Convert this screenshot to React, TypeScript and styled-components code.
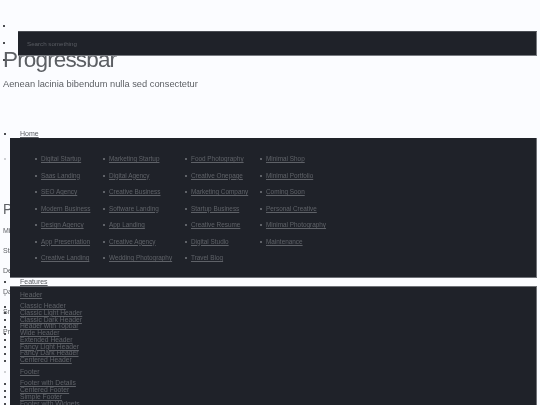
import * as React from 'react';
import styled, { createGlobalStyle } from 'styled-components';

const GlobalStyle = createGlobalStyle`
    html, body {
        margin: 0;
        height: 405px;
        overflow: hidden;
        background: #fbfcff;
    }
`;

const megaLinks = [
    'Digital Startup', 'Saas Landing', 'SEO Agency', 'Modern Business', 'Design Agency', 'App Presentation', 'Creative Landing',
    'Marketing Startup', 'Digital Agency', 'Creative Business', 'Software Landing', 'App Landing', 'Creative Agency', 'Wedding Photography',
    'Food Photography', 'Creative Onepage', 'Marketing Company', 'Startup Business', 'Creative Resume', 'Digital Studio', 'Travel Blog',
    'Minimal Shop', 'Minimal Portfolio', 'Coming Soon', 'Personal Creative', 'Minimal Photography', 'Maintenance',
];
const headerLinks = ['Classic Header', 'Classic Light Header', 'Classic Dark Header', 'Header with Topbar', 'Wide Header', 'Extended Header', 'Fancy Light Header', 'Fancy Dark Header', 'Centered Header'];
const footerLinks = ['Footer with Details', 'Centered Footer', 'Simple Footer', 'Footer with Widgets'];
const behindRows = ['Minimal', 'Standard', 'Default', 'Dark', 'Small', 'Progress'];

const Page = styled.div`
    position: relative;
    height: 405px;
    overflow: hidden;
    font-family: "Liberation Sans", Arial, sans-serif;
    color: #5c5f64;
    filter: blur(0.4px);
`;

const Content = styled.div`
    padding: 22px 0 0 3px;
`;

const TopBullets = styled.ul`
    list-style: none;
    margin: 0;
    padding: 0;
    height: 21px;
`;

const TopBullet = styled.li`
    width: 2px;
    height: 2px;
    margin: 3px 0 15px;
    background: #4a4c50;
`;

const Title = styled.h1`
    margin: 0;
    font-size: 22.5px;
    font-weight: 400;
    letter-spacing: -0.85px;
    line-height: 28px;
    color: #5c5f64;
`;

const Subtitle = styled.p`
    margin: 3px 0 0;
    font-size: 9.3px;
    line-height: 14px;
    color: #5c5f64;
`;

const SectionTitle = styled.h2`
    margin: 109px 0 0;
    font-size: 14px;
    font-weight: 400;
    line-height: 18px;
`;

const SectionRow = styled.p`
    margin: 0;
    height: 20.2px;
    font-size: 7px;
    line-height: 20.2px;
`;

const SectionRows = styled.div`
    margin-top: 3px;
`;

const SearchBox = styled.div`
    position: absolute;
    top: 31px;
    left: 18px;
    width: 519px;
    height: 25px;
    box-sizing: border-box;
    padding-left: 9px;
    display: flex;
    align-items: center;
    background: #1f2229;
    border-right: 1px solid #777a80;
    border-bottom: 1px solid #777a80;
    border-top: 1px solid #4a4d53;
    font-size: 6.2px;
    color: #5a5d63;
`;

const Nav = styled.nav`
    position: absolute;
    top: 130px;
    left: 0;
    right: 0;
    font-size: 7px;
`;

const TopLink = styled.a`
    position: relative;
    display: block;
    height: 8px;
    margin-left: 20px;
    line-height: 8px;
    color: #5c5f64;
    text-decoration: underline;

    &::before {
        content: "";
        position: absolute;
        top: 3px;
        left: -16px;
        width: 2px;
        height: 2px;
        background: #4a4c50;
    }
`;

const Panel = styled.div`
    position: relative;
    box-sizing: border-box;
    width: 527px;
    margin-left: 10px;
    background: #1f2229;
    border-right: 1px solid #6e7177;
    border-bottom: 1px solid #6e7177;
    color: #5f6268;

    a {
        color: inherit;
        text-decoration: underline;
    }
`;

const MegaPanel = styled(Panel)`
    height: 140px;
    padding: 12.8px 0 0 31px;
    display: grid;
    grid-template-columns: 68px 82px 75px 1fr;
    grid-template-rows: repeat(7, 16.5px);
    grid-auto-flow: column;
    align-items: center;
    font-size: 6.4px;

    &::before {
        content: "";
        position: absolute;
        top: 20px;
        left: -6px;
        width: 2px;
        height: 2px;
        background: #cfd1d4;
    }
`;

const MegaItem = styled.div`
    position: relative;
    line-height: 8px;

    &::before {
        content: "";
        position: absolute;
        top: 3px;
        left: -6px;
        width: 2px;
        height: 2px;
        background: #5f6268;
    }
`;

const FeaturesPanel = styled(Panel)`
    height: 140px;
    padding: 3.5px 0 0 10px;
    border-top: 1px solid #6e7177;
    font-size: 6.75px;
`;

const GroupLink = styled.a<{ $first?: boolean }>`
    position: relative;
    display: block;
    height: 7px;
    line-height: 7px;
    margin: ${(p) => (p.$first ? '0' : '4px')} 0 5.5px;

    &::before {
        content: "";
        position: absolute;
        top: 3px;
        left: -16px;
        width: 2px;
        height: 2px;
        background: #cfd1d4;
    }
`;

const GroupItem = styled.a`
    position: relative;
    display: block;
    height: 6.78px;
    line-height: 6.78px;

    &::before {
        content: "";
        position: absolute;
        top: 2.5px;
        left: -16px;
        width: 2px;
        height: 2px;
        background: #4a4c50;
    }
`;

const App: React.FC = (): JSX.Element => {
    return (
        <Page>
            <GlobalStyle />
            <Content>
                <TopBullets>
                    <TopBullet />
                    <TopBullet />
                    <TopBullet />
                </TopBullets>
                <Title>Progressbar</Title>
                <Subtitle>Aenean lacinia bibendum nulla sed consectetur</Subtitle>
                <SectionTitle>Progress</SectionTitle>
                <SectionRows>
                    {behindRows.map((row) => (
                        <SectionRow key={row}>{row}</SectionRow>
                    ))}
                </SectionRows>
            </Content>
            <SearchBox>Search something</SearchBox>
            <Nav>
                <TopLink href="#">Home</TopLink>
                <MegaPanel>
                    {megaLinks.map((link) => (
                        <MegaItem key={link}>
                            <a href="#">{link}</a>
                        </MegaItem>
                    ))}
                </MegaPanel>
                <TopLink href="#">Features</TopLink>
                <FeaturesPanel>
                    <GroupLink $first href="#">Header</GroupLink>
                    {headerLinks.map((link) => (
                        <GroupItem key={link} href="#">{link}</GroupItem>
                    ))}
                    <GroupLink href="#">Footer</GroupLink>
                    {footerLinks.map((link) => (
                        <GroupItem key={link} href="#">{link}</GroupItem>
                    ))}
                </FeaturesPanel>
            </Nav>
        </Page>
    );
};

export default App;
